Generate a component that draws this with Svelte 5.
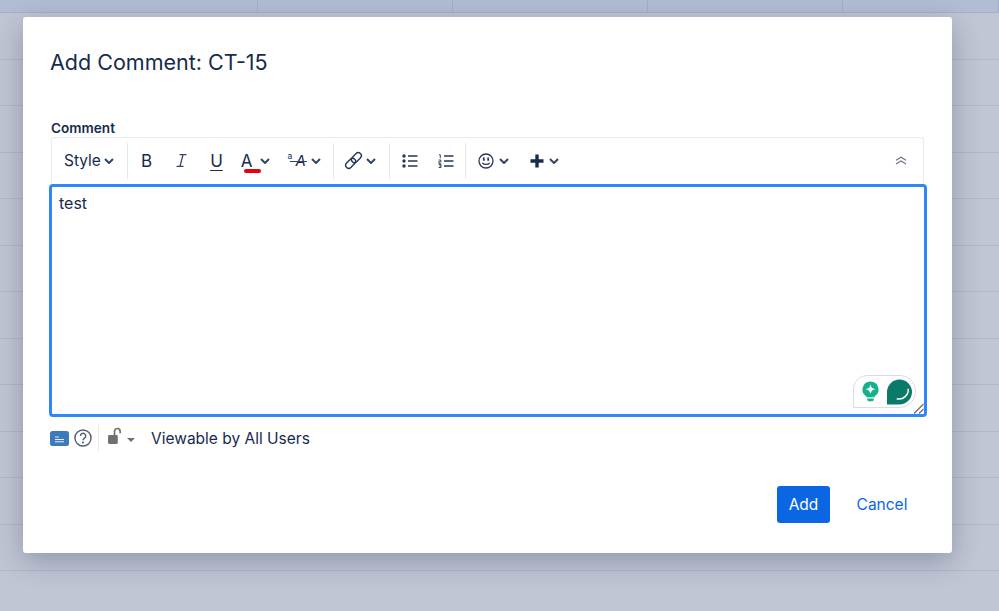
<script>
  const rows = Array(12);
  const cols = Array(5);
</script>

<div class="page">
  <div class="grid">
    <div class="head">
      {#each cols as _}<div class="cell"></div>{/each}
    </div>
    {#each rows as _}<div class="row"></div>{/each}
  </div>

  <div class="dialog">
    <h2>Add Comment: CT-15</h2>
    <div class="label">Comment</div>

    <div class="toolbar">
      <div class="group first">
        <span class="style">Style</span>
        <svg class="chev c-style" viewBox="0 0 10 6"><path d="M1 1l4 4 4-4" /></svg>
      </div>
      <div class="group marks">
        <span class="tb b">B</span>
        <svg class="ic" viewBox="0 0 11 13"><path d="M3.500 .7h7M.5 12.300h7M7 .7L4 12.300" /></svg>
        <span class="tb u">U</span>
        <span class="colour">A</span>
        <svg class="chev c-colour" viewBox="0 0 10 6"><path d="M1 1l4 4 4-4" /></svg>
        <span class="small-a"><sup>a</sup><em>A</em><i></i></span>
        <svg class="chev c-small" viewBox="0 0 10 6"><path d="M1 1l4 4 4-4" /></svg>
      </div>
      <div class="group links">
        <svg class="link" viewBox="0 0 20 20">
          <rect x="1" y="9.800" width="12" height="6.400" rx="3.200" transform="rotate(-45 7 13)" />
          <rect x="7" y="3.800" width="12" height="6.400" rx="3.200" transform="rotate(-45 13 7)" />
        </svg>
        <svg class="chev c-link" viewBox="0 0 10 6"><path d="M1 1l4 4 4-4" /></svg>
      </div>
      <div class="group lists">
        <svg class="list" viewBox="0 0 16 14">
          <circle cx="2" cy="2" r="1.700" /><circle cx="2" cy="7" r="1.700" /><circle cx="2" cy="12" r="1.700" />
          <path d="M6 2h9.500M6 7h9.500M6 12h9.500" />
        </svg>
        <svg class="list ol" viewBox="0 0 16 14">
          <path class="num" d="M1 .8h1.300v3.400M.6 6h2.300v1.700H.8v1.600h2.300M.7 10.500h2.300v3H.7M1.300 12h1.700" />
          <path d="M6 2h9.500M6 7h9.500M6 12h9.500" />
        </svg>
      </div>
      <div class="group inserts">
        <svg class="smile" viewBox="0 0 16 16">
          <circle cx="8" cy="8" r="7" />
          <path class="eye" d="M5.800 4.600v3.200M10.200 4.600v3.200" />
          <path d="M4.300 9.800c1.800 2.200 5.600 2.200 7.400 0" />
        </svg>
        <svg class="chev c-smile" viewBox="0 0 10 6"><path d="M1 1l4 4 4-4" /></svg>
        <svg class="plus" viewBox="0 0 14 14"><path d="M7 .5v13M.5 7h13" /></svg>
        <svg class="chev c-plus" viewBox="0 0 10 6"><path d="M1 1l4 4 4-4" /></svg>
      </div>
      <svg class="collapse" viewBox="0 0 12 9"><path d="M1 4.200L6 1.200l5 3M1 8l5-3 5 3" /></svg>
    </div>

    <div class="editor">
      <span class="text">test</span>
      <div class="grammarly">
        <svg class="bulb" viewBox="0 0 18 22">
          <path class="bulb-fill" d="M9 .5a8.500 8.500 0 0 0-4.300 15.800V17h8.600v-.7A8.500 8.500 0 0 0 9 .5z" />
          <path class="star" d="M9 3.300c.5 3.200 1.800 4.700 5.200 5.200-3.400.5-4.700 2-5.200 5.200-.5-3.200-1.800-4.700-5.200-5.200 3.400-.5 4.700-2 5.200-5.200z" />
          <path class="bulb-fill" d="M5.200 18.400h7.600l-1.200 3H6.400z" />
        </svg>
        <svg class="bubble" viewBox="0 0 27 27">
          <path class="bubble-fill" d="M13.500 0a13.500 13.500 0 0 1 13.500 13.500A13.500 13.500 0 0 1 13.500 27H0V13.500A13.500 13.500 0 0 1 13.500 0z" />
          <path class="arc" d="M22.800 10c1 6.500-5.300 12.500-12.300 10.800" />
        </svg>
      </div>
      <svg class="resize" viewBox="0 0 11 11"><path d="M10.500 1L1 10.500M10.500 6L6 10.500" /></svg>
    </div>

    <div class="meta">
      <svg class="wiki" viewBox="0 0 19 15">
        <rect width="19" height="15" rx="2.500" />
        <path d="M5 6h4M5 8.500h9M5 10.800h9" />
      </svg>
      <svg class="help" viewBox="0 0 19 19">
        <circle cx="9.500" cy="9.500" r="8.500" />
        <path d="M6.800 7.300a2.800 2.800 0 1 1 4.300 2.300c-1 .7-1.600 1.200-1.600 2.300" />
        <circle class="dot" cx="9.500" cy="14.300" r="1.100" />
      </svg>
      <span class="sep"></span>
      <svg class="lock" viewBox="0 0 15 18">
        <rect x="0" y="8" width="10.500" height="9.500" rx="1.500" />
        <path d="M7 8V4a3 3 0 0 1 6 0v2" />
      </svg>
      <span class="caret"></span>
      <span class="perm">Viewable by All Users</span>
    </div>

    <div class="actions">
      <button class="add">Add</button>
      <button class="cancel">Cancel</button>
    </div>
  </div>
</div>

<style>
  :global(body) {
    margin: 0;
    font-family: Inter, "Liberation Sans", sans-serif;
  }
  .page {
    position: relative;
    width: 999px;
    height: 611px;
    overflow: hidden;
    background: #c1c6d4;
  }
  .head {
    display: grid;
    grid-template-columns: 258px 195px 195px 195px 1fr;
    height: 13px;
    box-sizing: border-box;
    background: #b1bdd4;
    border-bottom: 1px solid #a8afc4;
  }
  .cell {
    border-right: 1px solid #a4aec6;
  }
  .row {
    height: 46.500px;
    box-sizing: border-box;
    border-bottom: 1px solid #b2b8c9;
  }
  .dialog {
    position: absolute;
    left: 23px;
    top: 17px;
    width: 929px;
    height: 536px;
    box-sizing: border-box;
    padding: 0 28px;
    background: #fff;
    border-radius: 3px;
    box-shadow: 0 8px 28px rgba(9, 30, 66, 0.28);
    color: #172b4d;
  }
  h2 {
    margin: 0 0 0 -1px;
    padding-top: 31px;
    font-size: 21.500px;
    line-height: 28px;
    font-weight: 400;
  }
  .label {
    margin-top: 44px;
    font-size: 13.600px;
    line-height: 16px;
    font-weight: 600;
  }
  .toolbar {
    display: flex;
    align-items: center;
    height: 47px;
    margin-top: 0.5px;
    box-sizing: border-box;
    border: 1px solid #e9ebef;
    border-bottom: 0;
    border-radius: 3px 3px 0 0;
  }
  .group {
    display: flex;
    align-items: center;
    height: 36px;
    border-right: 1px solid #e6e8ec;
    box-sizing: border-box;
  }
  .first { width: 76px; padding-left: 12px; }
  .marks { width: 206px; }
  .links { width: 56px; }
  .lists { width: 76px; }
  .inserts { border-right: 0; }
  .style { font-size: 15.500px; }
  .chev {
    width: 10px;
    height: 6px;
    margin-right: -1px;
    fill: none;
    stroke: #344563;
    stroke-width: 2;
    flex: none;
  }
  .c-style { margin-left: 3px; }
  .tb { font-size: 17px; line-height: 20px; }
  .b { margin-left: 13px; }
  .ic {
    width: 11px;
    height: 13px;
    margin-left: 24px;
    fill: none;
    stroke: #344563;
    stroke-width: 1.300;
    flex: none;
  }
  .u {
    margin-left: 23px;
    text-decoration: underline;
    text-underline-offset: 3px;
    text-decoration-thickness: 1.300px;
  }
  .colour {
    margin-left: 18px;
    font-size: 17px;
    line-height: 20px;
    position: relative;
  }
  .colour::after {
    content: "";
    position: absolute;
    left: 3px;
    right: -8px;
    bottom: -2px;
    height: 4px;
    border-radius: 2px;
    background: #e60012;
  }
  .c-colour { margin-left: 7px; }
  .small-a {
    position: relative;
    margin-left: 19px;
    display: inline-block;
    width: 19px;
    height: 18px;
    font-size: 15px;
    line-height: 18px;
  }
  .small-a sup {
    position: absolute;
    left: 0;
    top: -2px;
    font-size: 8.500px;
    line-height: 12px;
    vertical-align: baseline;
  }
  .small-a em {
    position: absolute;
    left: 8px;
    top: 0;
    font-style: italic;
    font-weight: 400;
  }
  .small-a i {
    position: absolute;
    left: 2px;
    right: 0;
    top: 9px;
    height: 1px;
    background: #344563;
  }
  .c-small { margin-left: 4px; }
  .link {
    width: 19px;
    height: 19px;
    margin-left: 10px;
    fill: none;
    stroke: #253858;
    stroke-width: 1.500;
    flex: none;
  }
  .c-link { margin-left: 3px; }
  .list {
    width: 16px;
    height: 14px;
    margin-left: 12px;
    fill: #253858;
    flex: none;
  }
  .list path {
    fill: none;
    stroke: #253858;
    stroke-width: 1.400;
  }
  .list.ol { margin-left: 20px; }
  .list .num { stroke-width: .9; }
  .smile {
    width: 16px;
    height: 16px;
    margin-left: 12px;
    fill: none;
    stroke: #253858;
    stroke-width: 1.300;
    flex: none;
  }
  .smile .eye { stroke-width: 1.800; }
  .c-smile { margin-left: 5px; }
  .plus {
    width: 14px;
    height: 14px;
    margin-left: 22px;
    fill: none;
    stroke: #172b4d;
    stroke-width: 3.400;
    flex: none;
  }
  .c-plus { margin-left: 5px; }
  .collapse {
    width: 12px;
    height: 9px;
    margin-left: auto;
    margin-right: 16px;
    fill: none;
    stroke: #6b778c;
    stroke-width: 1.300;
  }
  .editor {
    position: relative;
    margin-left: -2.500px;
    width: 878px;
    height: 233px;
    box-sizing: border-box;
    border: 3px solid #2f88fb;
    border-radius: 4px;
    padding: 5.500px 7.500px;
    font-size: 16px;
    line-height: 22px;
  }
  .grammarly {
    position: absolute;
    right: 7.500px;
    bottom: 5.500px;
    display: flex;
    align-items: center;
    gap: 8px;
    width: 63px;
    height: 33px;
    box-sizing: border-box;
    padding-left: 8px;
    border: 1px solid #d9dce8;
    border-radius: 14px 16px 16px 0;
    background: #fff;
  }
  .bulb { width: 17px; height: 21px; flex: none; }
  .bulb-fill { fill: #15b08f; }
  .star { fill: #fff; }
  .bubble { width: 25px; height: 26px; flex: none; }
  .bubble-fill { fill: #0c7a68; }
  .arc { fill: none; stroke: #fff; stroke-width: 1.600; }
  .resize {
    position: absolute;
    right: 0;
    bottom: 0;
    width: 11px;
    height: 11px;
    fill: none;
    stroke: #666;
    stroke-width: 1.100;
  }
  .meta {
    display: flex;
    align-items: center;
    height: 36px;
    margin-top: 3.500px;
    font-size: 15.500px;
  }
  .wiki { width: 19px; height: 15px; margin-left: -1px; flex: none; }
  .wiki rect { fill: #3b7abb; }
  .wiki path { stroke: #e6eef8; stroke-width: 1.100; fill: none; }
  .help {
    width: 18px;
    height: 18px;
    margin-left: 5px;
    flex: none;
    fill: none;
    stroke: #505f79;
    stroke-width: 1.500;
  }
  .help .dot { fill: #505f79; stroke: none; }
  .sep {
    width: 1px;
    height: 26px;
    margin-left: 6px;
    background: #e9ebef;
  }
  .lock {
    width: 14px;
    height: 18px;
    margin-left: 9px;
    margin-bottom: 4px;
    flex: none;
    fill: none;
  }
  .lock rect { fill: #707070; }
  .lock path { stroke: #707070; stroke-width: 1.800; }
  .caret {
    width: 0;
    height: 0;
    margin: 4px 0 0 5px;
    border: 4px solid transparent;
    border-top: 4px solid #707070;
    border-bottom: 0;
  }
  .perm { margin-left: 16px; }
  .actions {
    display: flex;
    align-items: center;
    justify-content: flex-end;
    margin-top: 30px;
    margin-right: -5.500px;
  }
  button {
    font: inherit;
    font-size: 15.500px;
    border: 0;
    cursor: pointer;
  }
  .add {
    width: 53px;
    height: 36.500px;
    border-radius: 3px;
    background: #0b66e4;
    color: #fff;
  }
  .cancel {
    width: 95px;
    height: 36.500px;
    margin-left: 4.500px;
    background: none;
    color: #0b66e4;
  }
</style>
